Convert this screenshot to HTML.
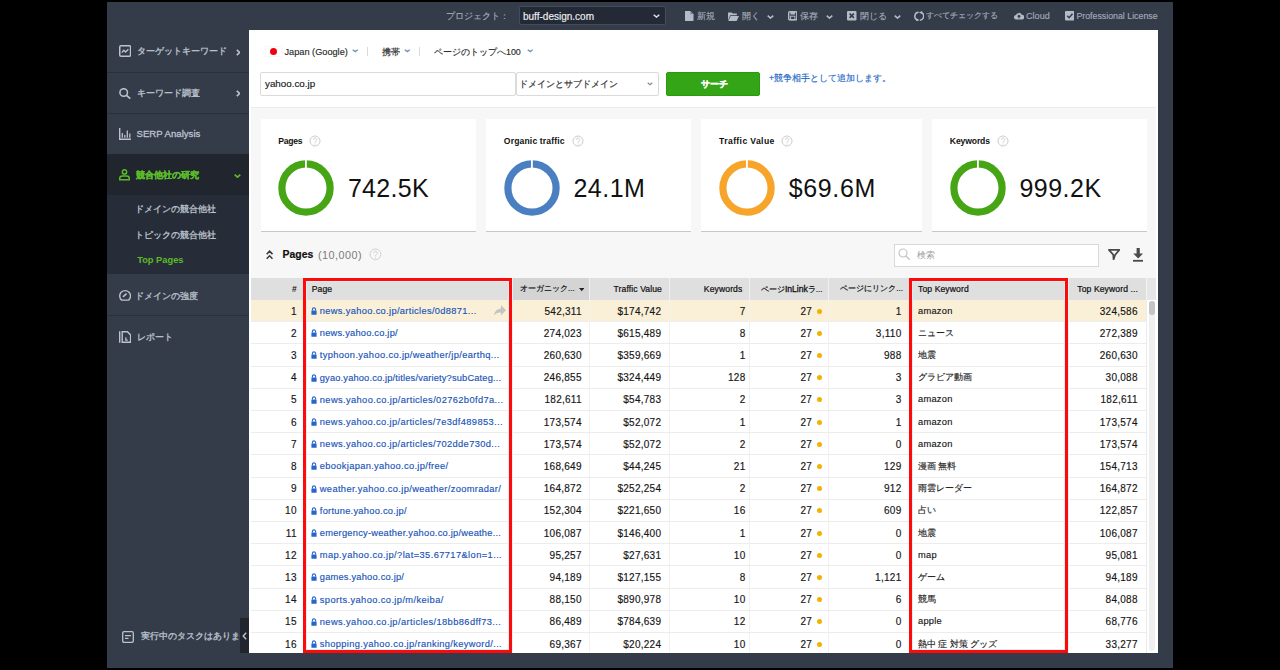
<!DOCTYPE html>
<html><head><meta charset="utf-8"><style>
*{margin:0;padding:0;box-sizing:border-box}
html,body{width:1280px;height:670px;overflow:hidden;background:#000;font-family:"Liberation Sans",sans-serif}
.ab{position:absolute;display:block}
.t{position:absolute;white-space:nowrap;line-height:1}
.num{font-size:10px;letter-spacing:0.27px;margin-right:-0.27px;color:#151515;-webkit-text-stroke:0.15px #151515}
.lnk{font-size:9.3px;color:#1853b8;-webkit-text-stroke:0.15px #1853b8}
.kw{font-size:9.3px;letter-spacing:0.25px;color:#151515;-webkit-text-stroke:0.15px #151515}
.kwj{font-size:8.7px;color:#222;-webkit-text-stroke:0.15px #222}
.hd{font-size:8.6px;letter-spacing:0.1px;color:#111;-webkit-text-stroke:0.22px #111}
.hdj{font-size:8px;color:#111;-webkit-text-stroke:0.2px #111}
</style></head><body>

<div class="ab" style="left:107px;top:2px;width:1066px;height:666px;background:#343b49"></div>
<div class="t" style="left:446px;top:12px;font-size:8.6px;color:#a3abb6;-webkit-text-stroke:0.15px #a3abb6">プロジェクト：</div>
<div class="ab" style="left:518.5px;top:6.3px;width:147px;height:19px;background:#232935;border:1px solid #444c59;border-radius:2px"></div>
<div class="t" style="left:523px;top:11.5px;font-size:10px;color:#eef0f3;-webkit-text-stroke:0.15px #eef0f3">buff-design.com</div>
<svg class="ab" style="left:653px;top:14px" width="7" height="4" viewBox="0 0 7 4"><path d="M0.7 0.7 L3.5 3.1 L6.3 0.7" fill="none" stroke="#d8dce2" stroke-width="1.5"/></svg>
<svg class="ab" style="left:685.3px;top:11px" width="8.5" height="10" viewBox="0 0 8.5 10"><path d="M0 0H5.3L8.5 3.2V10H0Z" fill="#b4bbc5"/><path d="M5.3 0V3.2H8.5" fill="#7f8794"/></svg>
<div class="t" style="left:697px;top:12px;font-size:8.6px;color:#a3abb6;-webkit-text-stroke:0.15px #a3abb6">新規</div>
<svg class="ab" style="left:727.9px;top:11.5px" width="11" height="9" viewBox="0 0 11 9"><path d="M0 0.5H3.8L4.8 1.6H8.8V3.3H2.2L0 8.5Z" fill="#b4bbc5"/><path d="M2.6 4H11L8.6 9H0.3Z" fill="#b4bbc5"/></svg>
<div class="t" style="left:741.5px;top:12px;font-size:8.6px;color:#a3abb6;-webkit-text-stroke:0.15px #a3abb6">開く</div>
<svg class="ab" style="left:767px;top:14.5px" width="7" height="4" viewBox="0 0 7 4"><path d="M0.7 0.7 L3.5 3.1 L6.3 0.7" fill="none" stroke="#b4bbc5" stroke-width="1.6"/></svg>
<svg class="ab" style="left:787.7px;top:11.3px" width="9.5" height="9.5" viewBox="0 0 9.5 9.5"><rect x="0.7" y="0.7" width="8.1" height="8.1" rx="1" fill="none" stroke="#b4bbc5" stroke-width="1.4"/><rect x="2.4" y="0.7" width="4.7" height="2.8" fill="#b4bbc5"/><rect x="2.6" y="5.2" width="4.3" height="3.6" fill="none" stroke="#b4bbc5" stroke-width="1"/></svg>
<div class="t" style="left:800px;top:12px;font-size:8.6px;color:#a3abb6;-webkit-text-stroke:0.15px #a3abb6">保存</div>
<svg class="ab" style="left:826px;top:14.5px" width="7" height="4" viewBox="0 0 7 4"><path d="M0.7 0.7 L3.5 3.1 L6.3 0.7" fill="none" stroke="#b4bbc5" stroke-width="1.6"/></svg>
<svg class="ab" style="left:847px;top:11.3px" width="9.5" height="9.5" viewBox="0 0 9.5 9.5"><rect x="0" y="0" width="9.5" height="9.5" rx="1" fill="#b4bbc5"/><path d="M2.6 2.6L6.9 6.9M6.9 2.6L2.6 6.9" stroke="#343b49" stroke-width="1.5"/></svg>
<div class="t" style="left:859.5px;top:12px;font-size:8.6px;color:#a3abb6;-webkit-text-stroke:0.15px #a3abb6">閉じる</div>
<svg class="ab" style="left:893.7px;top:14.5px" width="7" height="4" viewBox="0 0 7 4"><path d="M0.7 0.7 L3.5 3.1 L6.3 0.7" fill="none" stroke="#b4bbc5" stroke-width="1.6"/></svg>
<svg class="ab" style="left:913.8px;top:10.6px" width="10.5" height="10.5" viewBox="0 0 10.5 10.5"><path d="M4.6 1.3A4 4 0 0 0 3.3 9" fill="none" stroke="#b4bbc5" stroke-width="1.5"/><path d="M1.9 7.2L5.6 8.9L2.4 10.6Z" fill="#b4bbc5"/><path d="M5.9 9.2A4 4 0 0 0 7.2 1.5" fill="none" stroke="#b4bbc5" stroke-width="1.5"/><path d="M8.6 3.3L4.9 1.6L8.1 0Z" fill="#b4bbc5"/></svg>
<div class="t" style="left:926px;top:12px;font-size:8.2px;color:#a3abb6;-webkit-text-stroke:0.15px #a3abb6">すべてチェックする</div>
<svg class="ab" style="left:1013.6px;top:12.3px" width="10" height="7.5" viewBox="0 0 10 7.5"><path d="M2.3 7.5A2.2 2.2 0 0 1 2 3.1A3.1 3.1 0 0 1 7.8 2.7A2.3 2.3 0 0 1 7.9 7.5Z" fill="#b4bbc5"/><path d="M5 3.2V6.5M3.6 4.6L5 3.2L6.4 4.6" stroke="#343b49" stroke-width="1.1" fill="none"/></svg>
<div class="t" style="left:1026px;top:11.8px;font-size:9.1px;color:#a3abb6;-webkit-text-stroke:0.15px #a3abb6">Cloud</div>
<svg class="ab" style="left:1064.6px;top:11.2px" width="9.5" height="9.5" viewBox="0 0 9.5 9.5"><rect x="0" y="0" width="9.5" height="9.5" rx="1" fill="#b4bbc5"/><path d="M2.2 4.8L4.1 6.7L7.5 2.7" stroke="#343b49" stroke-width="1.5" fill="none"/></svg>
<div class="t" style="left:1076.4px;top:11.8px;font-size:8.8px;color:#a3abb6;-webkit-text-stroke:0.15px #a3abb6">Professional License</div>
<div class="ab" style="left:107px;top:71.5px;width:142px;height:1.2px;background:#2b313c"></div>
<div class="ab" style="left:107px;top:112.5px;width:142px;height:1.2px;background:#2b313c"></div>
<div class="ab" style="left:107px;top:154px;width:142px;height:41px;background:#20252e"></div>
<div class="ab" style="left:107px;top:195px;width:142px;height:79px;background:#272d38"></div>
<div class="ab" style="left:107px;top:315px;width:142px;height:1.2px;background:#2c323d"></div>
<svg class="ab" style="left:118.7px;top:44.8px" width="12.3" height="12" viewBox="0 0 12.3 12"><rect x="0.75" y="0.75" width="10.8" height="10.5" rx="1.3" fill="none" stroke="#bcc3cd" stroke-width="1.5"/><path d="M2.8 7.6L4.8 5.3L6.6 7L9.4 4.2" fill="none" stroke="#bcc3cd" stroke-width="1.3"/></svg>
<div class="t" style="left:137px;top:46.5px;font-size:8.9px;color:#bcc3cd;-webkit-text-stroke:0.3px #bcc3cd">ターゲットキーワード</div>
<svg class="ab" style="left:235.8px;top:49px" width="4.5" height="7" viewBox="0 0 4.5 7"><path d="M0.8 0.8L3.6 3.5L0.8 6.2" fill="none" stroke="#bcc3cd" stroke-width="1.6"/></svg>
<svg class="ab" style="left:118.7px;top:87.6px" width="12.3" height="11" viewBox="0 0 12.3 11"><circle cx="4.7" cy="4.5" r="3.8" fill="none" stroke="#bcc3cd" stroke-width="1.5"/><path d="M7.5 7.3L11.3 10.6" stroke="#bcc3cd" stroke-width="1.7"/></svg>
<div class="t" style="left:137px;top:89px;font-size:8.9px;color:#bcc3cd;-webkit-text-stroke:0.3px #bcc3cd">キーワード調査</div>
<svg class="ab" style="left:235.8px;top:90px" width="4.5" height="7" viewBox="0 0 4.5 7"><path d="M0.8 0.8L3.6 3.5L0.8 6.2" fill="none" stroke="#bcc3cd" stroke-width="1.6"/></svg>
<svg class="ab" style="left:119px;top:128px" width="12" height="12" viewBox="0 0 12 12"><path d="M0.7 0V11.3H12" fill="none" stroke="#bcc3cd" stroke-width="1.4"/><path d="M3.3 5V9.8M5.8 7V9.8M8.3 2.5V9.8M10.8 5.5V9.8" stroke="#bcc3cd" stroke-width="1.3"/></svg>
<div class="t" style="left:136.5px;top:129.3px;font-size:9.6px;color:#bcc3cd;-webkit-text-stroke:0.3px #bcc3cd">SERP Analysis</div>
<svg class="ab" style="left:119px;top:169.4px" width="11" height="11.6" viewBox="0 0 11 11.6"><circle cx="5.5" cy="2.9" r="2.2" fill="none" stroke="#5cba2a" stroke-width="1.5"/><path d="M0.75 10.85V9.3A2.4 2.4 0 0 1 3.15 6.9H7.85A2.4 2.4 0 0 1 10.25 9.3V10.85Z" fill="none" stroke="#5cba2a" stroke-width="1.5"/></svg>
<div class="t" style="left:135.5px;top:170.5px;font-size:8.9px;font-weight:bold;color:#5cba2a;-webkit-text-stroke:0.3px #5cba2a">競合他社の研究</div>
<svg class="ab" style="left:234px;top:174.2px" width="7" height="4" viewBox="0 0 7 4"><path d="M0.7 0.7 L3.5 3.1 L6.3 0.7" fill="none" stroke="#5cba2a" stroke-width="1.7"/></svg>
<div class="t" style="left:134.5px;top:204.5px;font-size:8.8px;color:#bcc3cd;-webkit-text-stroke:0.3px #bcc3cd">ドメインの競合他社</div>
<div class="t" style="left:134.5px;top:230.5px;font-size:8.8px;color:#bcc3cd;-webkit-text-stroke:0.3px #bcc3cd">トピックの競合他社</div>
<div class="t" style="left:137.2px;top:256.2px;font-size:9.3px;font-weight:bold;color:#5cba2a">Top Pages</div>
<svg class="ab" style="left:118.7px;top:289.2px" width="12.2" height="11.8" viewBox="0 0 12.2 11.8"><path d="M2.6 11.1A5.4 5.4 0 1 1 9.6 11.1Z" fill="none" stroke="#bcc3cd" stroke-width="1.4"/><path d="M3.9 7.9L7.6 4.6" stroke="#bcc3cd" stroke-width="1.5"/></svg>
<div class="t" style="left:134.5px;top:292px;font-size:8.8px;color:#bcc3cd;-webkit-text-stroke:0.3px #bcc3cd">ドメインの強度</div>
<svg class="ab" style="left:118.7px;top:330.5px" width="12.3" height="12" viewBox="0 0 12.3 12"><path d="M0.7 0.3V11.7" stroke="#bcc3cd" stroke-width="1.4"/><path d="M3.2 0.7H8.4L11.6 3.9V11.3H3.2Z" fill="none" stroke="#bcc3cd" stroke-width="1.4"/><path d="M6.8 6.3V9.2H8.8" fill="none" stroke="#bcc3cd" stroke-width="1.2"/></svg>
<div class="t" style="left:136.5px;top:332.5px;font-size:8.8px;color:#bcc3cd;-webkit-text-stroke:0.3px #bcc3cd">レポート</div>
<svg class="ab" style="left:121.5px;top:630.5px" width="12" height="12" viewBox="0 0 12 12"><rect x="0.7" y="0.7" width="10.6" height="10.6" rx="1.3" fill="none" stroke="#bcc3cd" stroke-width="1.3"/><path d="M3 4.6H9M3 7.4H6.5" stroke="#bcc3cd" stroke-width="1.2"/></svg>
<div class="t" style="left:141px;top:632px;font-size:8.8px;color:#bcc3cd;-webkit-text-stroke:0.3px #bcc3cd">実行中のタスクはありませ</div>
<div class="ab" style="left:240px;top:617.5px;width:9px;height:35.5px;background:#20252e"></div>
<svg class="ab" style="left:242px;top:632px" width="5" height="8" viewBox="0 0 5 8"><path d="M4.2 0.8L1.2 4L4.2 7.2" fill="none" stroke="#bcc3cd" stroke-width="1.4"/></svg>
<div class="ab" style="left:249px;top:30px;width:909px;height:623px;background:#fff"></div>
<div class="ab" style="left:0;top:0;width:1280px;height:653px;overflow:hidden;clip-path:inset(30px 122px 0 249px)">
<div class="ab" style="left:265.6px;top:46.7px;width:16px;height:9.8px;background:#fff;box-shadow:0 0 1.5px rgba(0,0,0,.13)"></div>
<div class="ab" style="left:270.2px;top:47.6px;width:7.1px;height:7.1px;border-radius:50%;background:#f0000f"></div>
<div class="t" style="left:284.5px;top:47.9px;font-size:9.2px;color:#2a2a2a;-webkit-text-stroke:0.15px #2a2a2a">Japan (Google)</div>
<svg class="ab" style="left:352px;top:49.2px" width="6.5" height="3.5" viewBox="0 0 6.5 3.5"><path d="M0.7 0.7 L3.25 2.6 L5.8 0.7" fill="none" stroke="#7a90ab" stroke-width="1.3"/></svg>
<div class="ab" style="left:367px;top:47px;width:1px;height:9px;background:#dadada"></div>
<div class="t" style="left:382px;top:48px;font-size:8.8px;color:#2a2a2a;-webkit-text-stroke:0.15px #2a2a2a">携帯</div>
<svg class="ab" style="left:404.2px;top:49.2px" width="6.5" height="3.5" viewBox="0 0 6.5 3.5"><path d="M0.7 0.7 L3.25 2.6 L5.8 0.7" fill="none" stroke="#7a90ab" stroke-width="1.3"/></svg>
<div class="ab" style="left:419px;top:47px;width:1px;height:9px;background:#dadada"></div>
<div class="t" style="left:434px;top:48px;font-size:8.9px;color:#2a2a2a;-webkit-text-stroke:0.15px #2a2a2a">ページのトップへ100</div>
<svg class="ab" style="left:526.5px;top:49.2px" width="6.5" height="3.5" viewBox="0 0 6.5 3.5"><path d="M0.7 0.7 L3.25 2.6 L5.8 0.7" fill="none" stroke="#7a90ab" stroke-width="1.3"/></svg>
<div class="ab" style="left:260px;top:72.4px;width:256px;height:23.2px;border:1px solid #dadada;border-radius:2px;background:#fff"></div>
<div class="t" style="left:265px;top:79px;font-size:9.8px;color:#1a1a1a;-webkit-text-stroke:0.15px #1a1a1a">yahoo.co.jp</div>
<div class="ab" style="left:515.6px;top:72.4px;width:143px;height:23.2px;border:1px solid #dadada;border-radius:2px;background:#fff"></div>
<div class="t" style="left:518.5px;top:79.5px;font-size:8.8px;color:#2a2a2a;-webkit-text-stroke:0.15px #2a2a2a">ドメインとサブドメイン</div>
<svg class="ab" style="left:646.5px;top:82px" width="6" height="3.5" viewBox="0 0 6 3.5"><path d="M0.7 0.7 L3.0 2.6 L5.3 0.7" fill="none" stroke="#8a8a8a" stroke-width="1.2"/></svg>
<div class="ab" style="left:666px;top:72.2px;width:94.4px;height:23.4px;background:#33a516;border:1px solid #2b9a10;border-radius:2px"></div>
<div class="t" style="left:700.5px;top:79.5px;font-size:8.8px;font-weight:bold;color:#fff;-webkit-text-stroke:0.35px #fff">サーチ</div>
<div class="t" style="left:769px;top:73.5px;font-size:8.6px;color:#2468c6;-webkit-text-stroke:0.15px #2468c6">+競争相手として追加します。</div>
<div class="ab" style="left:251px;top:107px;width:905px;height:546px;background:#f7f7f7;border-top:1px solid #ebebeb"></div>
<div class="ab" style="left:260.5px;top:118.7px;width:215px;height:113.5px;background:#fff;border-bottom:1.5px solid #c8c8c8"></div>
<div class="t" style="left:278.3px;top:137.2px;font-size:8.6px;font-weight:bold;color:#111;letter-spacing:-0.25px">Pages</div>
<svg class="ab" style="left:308.7px;top:135.2px" width="12" height="12" viewBox="0 0 12 12"><circle cx="6" cy="6" r="5" fill="none" stroke="#cccccc" stroke-width="1"/><path d="M4.3 4.8A1.7 1.7 0 1 1 7.1 6.1C6.3 6.6 6 6.9 6 7.7" fill="none" stroke="#cccccc" stroke-width="1"/><circle cx="6" cy="9.1" r="0.6" fill="#cccccc"/></svg>
<svg class="ab" style="left:278.3px;top:159.5px" width="56" height="56" viewBox="0 0 56 56"><circle cx="28" cy="28" r="24.1" fill="none" stroke="#45a515" stroke-width="7.2"/><rect x="27" y="0" width="1.8" height="9" fill="#fff"/></svg>
<div class="t" style="left:347.9px;top:175.6px;font-size:25px;color:#111;letter-spacing:0.3px">742.5K</div>
<div class="ab" style="left:486px;top:118.7px;width:205.25px;height:113.5px;background:#fff;border-bottom:1.5px solid #c8c8c8"></div>
<div class="t" style="left:503.8px;top:137.2px;font-size:8.6px;font-weight:bold;color:#111;letter-spacing:0.15px">Organic traffic</div>
<svg class="ab" style="left:571.5px;top:135.2px" width="12" height="12" viewBox="0 0 12 12"><circle cx="6" cy="6" r="5" fill="none" stroke="#cccccc" stroke-width="1"/><path d="M4.3 4.8A1.7 1.7 0 1 1 7.1 6.1C6.3 6.6 6 6.9 6 7.7" fill="none" stroke="#cccccc" stroke-width="1"/><circle cx="6" cy="9.1" r="0.6" fill="#cccccc"/></svg>
<svg class="ab" style="left:503.79999999999995px;top:159.5px" width="56" height="56" viewBox="0 0 56 56"><circle cx="28" cy="28" r="24.1" fill="none" stroke="#4a80c1" stroke-width="7.2"/><rect x="27" y="0" width="1.8" height="9" fill="#fff"/></svg>
<div class="t" style="left:573.4px;top:175.6px;font-size:25px;color:#111;letter-spacing:0.5px">24.1M</div>
<div class="ab" style="left:701.3px;top:118.7px;width:220.7px;height:113.5px;background:#fff;border-bottom:1.5px solid #c8c8c8"></div>
<div class="t" style="left:719.0999999999999px;top:137.2px;font-size:8.6px;font-weight:bold;color:#111;letter-spacing:0.38px">Traffic Value</div>
<svg class="ab" style="left:780.5px;top:135.2px" width="12" height="12" viewBox="0 0 12 12"><circle cx="6" cy="6" r="5" fill="none" stroke="#cccccc" stroke-width="1"/><path d="M4.3 4.8A1.7 1.7 0 1 1 7.1 6.1C6.3 6.6 6 6.9 6 7.7" fill="none" stroke="#cccccc" stroke-width="1"/><circle cx="6" cy="9.1" r="0.6" fill="#cccccc"/></svg>
<svg class="ab" style="left:719.0999999999999px;top:159.5px" width="56" height="56" viewBox="0 0 56 56"><circle cx="28" cy="28" r="24.1" fill="none" stroke="#f7a42a" stroke-width="7.2"/><rect x="27" y="0" width="1.8" height="9" fill="#fff"/></svg>
<div class="t" style="left:788.6999999999999px;top:175.6px;font-size:25px;color:#111;letter-spacing:0.65px">$69.6M</div>
<div class="ab" style="left:932px;top:118.7px;width:215px;height:113.5px;background:#fff;border-bottom:1.5px solid #c8c8c8"></div>
<div class="t" style="left:949.8px;top:137.2px;font-size:8.6px;font-weight:bold;color:#111;letter-spacing:-0.12px">Keywords</div>
<svg class="ab" style="left:996.5px;top:135.2px" width="12" height="12" viewBox="0 0 12 12"><circle cx="6" cy="6" r="5" fill="none" stroke="#cccccc" stroke-width="1"/><path d="M4.3 4.8A1.7 1.7 0 1 1 7.1 6.1C6.3 6.6 6 6.9 6 7.7" fill="none" stroke="#cccccc" stroke-width="1"/><circle cx="6" cy="9.1" r="0.6" fill="#cccccc"/></svg>
<svg class="ab" style="left:949.8px;top:159.5px" width="56" height="56" viewBox="0 0 56 56"><circle cx="28" cy="28" r="24.1" fill="none" stroke="#45a515" stroke-width="7.2"/><rect x="27" y="0" width="1.8" height="9" fill="#fff"/></svg>
<div class="t" style="left:1019.4px;top:175.6px;font-size:25px;color:#111;letter-spacing:0.5px">999.2K</div>
<svg class="ab" style="left:265.7px;top:250px" width="7.2" height="9.6" viewBox="0 0 7.2 9.6"><path d="M0.7 4.2L3.6 1.2L6.5 4.2M0.7 8.8L3.6 5.8L6.5 8.8" fill="none" stroke="#3a3a3a" stroke-width="1.6"/></svg>
<div class="t" style="left:282.6px;top:250.4px;font-size:10.4px;font-weight:bold;color:#111;-webkit-text-stroke:0.2px #111">Pages</div>
<div class="t" style="left:318px;top:249.8px;font-size:10.8px;letter-spacing:0.5px;color:#7a7a7a">(10,000)</div>
<svg class="ab" style="left:369.0px;top:248.2px" width="12.8" height="12.8" viewBox="0 0 12.8 12.8"><circle cx="6.4" cy="6.4" r="5.4" fill="none" stroke="#d0d0d0" stroke-width="1"/><path d="M4.564 5.104A1.836 1.836 0 1 1 7.588000000000001 6.508C6.724 7.048 6.4 7.372000000000001 6.4 8.236" fill="none" stroke="#d0d0d0" stroke-width="1"/><circle cx="6.4" cy="9.748000000000001" r="0.648" fill="#d0d0d0"/></svg>
<div class="ab" style="left:894px;top:243.6px;width:205px;height:23px;border:1px solid #d8d8d8;background:#fff"></div>
<svg class="ab" style="left:898px;top:248px" width="13" height="13" viewBox="0 0 13 13"><circle cx="5" cy="5" r="4" fill="none" stroke="#c6c6c6" stroke-width="1.2"/><path d="M7.9 7.9L11.8 11.8" stroke="#c6c6c6" stroke-width="1.4"/></svg>
<div class="t" style="left:917px;top:250.5px;font-size:8.8px;color:#a0a0a0">検索</div>
<svg class="ab" style="left:1108px;top:249px" width="12.4" height="11.4" viewBox="0 0 12.4 11.4"><path d="M0.9 0.9H11.5L7.3 5.6L5.6 10.6L5.2 5.6Z" fill="none" stroke="#4a4a4a" stroke-width="1.7" stroke-linejoin="round"/></svg>
<svg class="ab" style="left:1133px;top:248.4px" width="10.4" height="13.7" viewBox="0 0 10.4 13.7"><path d="M3.6 0H6.8V5.4H10.2L5.2 10.6L0.2 5.4H3.6Z" fill="#4a4a4a"/><rect x="0" y="11.9" width="10.4" height="1.8" fill="#4a4a4a"/></svg>
<div class="ab" style="left:251px;top:278.2px;width:895px;height:21.8px;background:#dfdfdf"></div>
<div class="ab" style="left:512px;top:278.2px;width:77px;height:21.8px;background:#d4d4d4"></div>
<div class="ab" style="left:512px;top:278.2px;width:1px;height:21.8px;background:#f0f0f0"></div>
<div class="ab" style="left:589px;top:278.2px;width:1px;height:21.8px;background:#f0f0f0"></div>
<div class="ab" style="left:669px;top:278.2px;width:1px;height:21.8px;background:#f0f0f0"></div>
<div class="ab" style="left:749px;top:278.2px;width:1px;height:21.8px;background:#f0f0f0"></div>
<div class="ab" style="left:828px;top:278.2px;width:1px;height:21.8px;background:#f0f0f0"></div>
<div class="ab" style="left:909px;top:278.2px;width:1px;height:21.8px;background:#f0f0f0"></div>
<div class="ab" style="left:1068px;top:278.2px;width:1px;height:21.8px;background:#f0f0f0"></div>
<div class="ab" style="left:1146px;top:278.2px;width:10px;height:21.8px;background:#e6e6e6;border-left:1px solid #f4f4f4"></div>
<div class="ab" style="left:1145.5px;top:300px;width:10.5px;height:353px;background:#fff;border-left:1px solid #ececec"></div>
<div class="ab" style="left:1149.2px;top:301.2px;width:5.8px;height:349.5px;background:#efefef;border-radius:3px"></div>
<div class="ab" style="left:1149.2px;top:301.2px;width:5.8px;height:14.2px;background:#c4c4c4;border-radius:3px"></div>
<div class="t" style="right:983.2px;top:285.3px;font-size:8.5px;font-weight:bold;color:#1a1a1a">#</div>
<div class="t hd" style="left:311.7px;top:285.3px">Page</div>
<div class="t hdj" style="left:520px;top:285.0px">オーガニック...</div>
<svg class="ab" style="left:578.5px;top:288px" width="5.5" height="3.5" viewBox="0 0 5.5 3.5"><path d="M0 0H5.5L2.75 3.3Z" fill="#222"/></svg>
<div class="t hd" style="right:618px;top:285.3px">Traffic Value</div>
<div class="t hd" style="right:537.6px;top:285.3px">Keywords</div>
<div class="t hdj" style="right:457.5px;top:285.0px">ページ<span style="font-size:8.6px;-webkit-text-stroke:0.3px #111">InLink</span>ラ...</div>
<div class="t hdj" style="right:377px;top:285.0px">ページにリンク...</div>
<div class="t hd" style="left:918px;top:285.3px">Top Keyword</div>
<div class="t hd" style="right:142px;top:285.3px">Top Keyword ...</div>
<div class="ab" style="left:251px;top:300.0px;width:895px;height:22.2px;background:#faf0d8;border-bottom:1px solid #ededed"></div>
<div class="ab" style="left:512px;top:300.0px;width:1px;height:21.2px;background:#f1f1f1"></div>
<div class="ab" style="left:589px;top:300.0px;width:1px;height:21.2px;background:#f1f1f1"></div>
<div class="ab" style="left:669px;top:300.0px;width:1px;height:21.2px;background:#f1f1f1"></div>
<div class="ab" style="left:749px;top:300.0px;width:1px;height:21.2px;background:#f1f1f1"></div>
<div class="ab" style="left:828px;top:300.0px;width:1px;height:21.2px;background:#f1f1f1"></div>
<div class="ab" style="left:909px;top:300.0px;width:1px;height:21.2px;background:#f1f1f1"></div>
<div class="ab" style="left:1068px;top:300.0px;width:1px;height:21.2px;background:#f1f1f1"></div>
<div class="t num" style="right:983.5px;top:306.5px">1</div>
<svg class="ab" style="left:311.2px;top:307.0px" width="6" height="8" viewBox="0 0 6 8"><path d="M1.4 3.6V2.5a1.6 1.6 0 0 1 3.2 0V3.6" fill="none" stroke="#2566c8" stroke-width="1.1"/><rect x="0.4" y="3.4" width="5.2" height="4.3" rx="0.5" fill="#2566c8"/></svg>
<div class="t lnk" style="left:319.8px;top:307.0px;letter-spacing:0.331px">news.yahoo.co.jp/articles/0d8871...</div>
<div class="t num" style="right:698.5px;top:306.5px">542,311</div>
<div class="t num" style="right:619px;top:306.5px">$174,742</div>
<div class="t num" style="right:534.8px;top:306.5px">7</div>
<div class="t num" style="right:468.20000000000005px;top:306.5px">27</div>
<div class="ab" style="left:816.6px;top:308.6px;width:5px;height:5px;border-radius:50%;background:#f0b300"></div>
<div class="t num" style="right:378.79999999999995px;top:306.5px">1</div>
<div class="t kw" style="left:918px;top:306.6px">amazon</div>
<div class="t num" style="right:142.5px;top:306.5px">324,586</div>
<div class="ab" style="left:251px;top:322.2px;width:895px;height:22.2px;background:#fff;border-bottom:1px solid #ededed"></div>
<div class="ab" style="left:512px;top:322.2px;width:1px;height:21.2px;background:#f1f1f1"></div>
<div class="ab" style="left:589px;top:322.2px;width:1px;height:21.2px;background:#f1f1f1"></div>
<div class="ab" style="left:669px;top:322.2px;width:1px;height:21.2px;background:#f1f1f1"></div>
<div class="ab" style="left:749px;top:322.2px;width:1px;height:21.2px;background:#f1f1f1"></div>
<div class="ab" style="left:828px;top:322.2px;width:1px;height:21.2px;background:#f1f1f1"></div>
<div class="ab" style="left:909px;top:322.2px;width:1px;height:21.2px;background:#f1f1f1"></div>
<div class="ab" style="left:1068px;top:322.2px;width:1px;height:21.2px;background:#f1f1f1"></div>
<div class="t num" style="right:983.5px;top:328.7px">2</div>
<svg class="ab" style="left:311.2px;top:329.2px" width="6" height="8" viewBox="0 0 6 8"><path d="M1.4 3.6V2.5a1.6 1.6 0 0 1 3.2 0V3.6" fill="none" stroke="#2566c8" stroke-width="1.1"/><rect x="0.4" y="3.4" width="5.2" height="4.3" rx="0.5" fill="#2566c8"/></svg>
<div class="t lnk" style="left:319.8px;top:329.2px;letter-spacing:0.211px">news.yahoo.co.jp/</div>
<div class="t num" style="right:698.5px;top:328.7px">274,023</div>
<div class="t num" style="right:619px;top:328.7px">$615,489</div>
<div class="t num" style="right:534.8px;top:328.7px">8</div>
<div class="t num" style="right:468.20000000000005px;top:328.7px">27</div>
<div class="ab" style="left:816.6px;top:330.8px;width:5px;height:5px;border-radius:50%;background:#f0b300"></div>
<div class="t num" style="right:378.79999999999995px;top:328.7px">3,110</div>
<div class="t kwj" style="left:918px;top:328.8px">ニュース</div>
<div class="t num" style="right:142.5px;top:328.7px">272,389</div>
<div class="ab" style="left:251px;top:344.4px;width:895px;height:22.2px;background:#fff;border-bottom:1px solid #ededed"></div>
<div class="ab" style="left:512px;top:344.4px;width:1px;height:21.2px;background:#f1f1f1"></div>
<div class="ab" style="left:589px;top:344.4px;width:1px;height:21.2px;background:#f1f1f1"></div>
<div class="ab" style="left:669px;top:344.4px;width:1px;height:21.2px;background:#f1f1f1"></div>
<div class="ab" style="left:749px;top:344.4px;width:1px;height:21.2px;background:#f1f1f1"></div>
<div class="ab" style="left:828px;top:344.4px;width:1px;height:21.2px;background:#f1f1f1"></div>
<div class="ab" style="left:909px;top:344.4px;width:1px;height:21.2px;background:#f1f1f1"></div>
<div class="ab" style="left:1068px;top:344.4px;width:1px;height:21.2px;background:#f1f1f1"></div>
<div class="t num" style="right:983.5px;top:350.9px">3</div>
<svg class="ab" style="left:311.2px;top:351.4px" width="6" height="8" viewBox="0 0 6 8"><path d="M1.4 3.6V2.5a1.6 1.6 0 0 1 3.2 0V3.6" fill="none" stroke="#2566c8" stroke-width="1.1"/><rect x="0.4" y="3.4" width="5.2" height="4.3" rx="0.5" fill="#2566c8"/></svg>
<div class="t lnk" style="left:319.8px;top:351.4px;letter-spacing:0.359px">typhoon.yahoo.co.jp/weather/jp/earthq...</div>
<div class="t num" style="right:698.5px;top:350.9px">260,630</div>
<div class="t num" style="right:619px;top:350.9px">$359,669</div>
<div class="t num" style="right:534.8px;top:350.9px">1</div>
<div class="t num" style="right:468.20000000000005px;top:350.9px">27</div>
<div class="ab" style="left:816.6px;top:353.0px;width:5px;height:5px;border-radius:50%;background:#f0b300"></div>
<div class="t num" style="right:378.79999999999995px;top:350.9px">988</div>
<div class="t kwj" style="left:918px;top:351.0px">地震</div>
<div class="t num" style="right:142.5px;top:350.9px">260,630</div>
<div class="ab" style="left:251px;top:366.6px;width:895px;height:22.2px;background:#fff;border-bottom:1px solid #ededed"></div>
<div class="ab" style="left:512px;top:366.6px;width:1px;height:21.2px;background:#f1f1f1"></div>
<div class="ab" style="left:589px;top:366.6px;width:1px;height:21.2px;background:#f1f1f1"></div>
<div class="ab" style="left:669px;top:366.6px;width:1px;height:21.2px;background:#f1f1f1"></div>
<div class="ab" style="left:749px;top:366.6px;width:1px;height:21.2px;background:#f1f1f1"></div>
<div class="ab" style="left:828px;top:366.6px;width:1px;height:21.2px;background:#f1f1f1"></div>
<div class="ab" style="left:909px;top:366.6px;width:1px;height:21.2px;background:#f1f1f1"></div>
<div class="ab" style="left:1068px;top:366.6px;width:1px;height:21.2px;background:#f1f1f1"></div>
<div class="t num" style="right:983.5px;top:373.1px">4</div>
<svg class="ab" style="left:311.2px;top:373.6px" width="6" height="8" viewBox="0 0 6 8"><path d="M1.4 3.6V2.5a1.6 1.6 0 0 1 3.2 0V3.6" fill="none" stroke="#2566c8" stroke-width="1.1"/><rect x="0.4" y="3.4" width="5.2" height="4.3" rx="0.5" fill="#2566c8"/></svg>
<div class="t lnk" style="left:319.8px;top:373.6px;letter-spacing:0.157px">gyao.yahoo.co.jp/titles/variety?subCateg...</div>
<div class="t num" style="right:698.5px;top:373.1px">246,855</div>
<div class="t num" style="right:619px;top:373.1px">$324,449</div>
<div class="t num" style="right:534.8px;top:373.1px">128</div>
<div class="t num" style="right:468.20000000000005px;top:373.1px">27</div>
<div class="ab" style="left:816.6px;top:375.2px;width:5px;height:5px;border-radius:50%;background:#f0b300"></div>
<div class="t num" style="right:378.79999999999995px;top:373.1px">3</div>
<div class="t kwj" style="left:918px;top:373.2px">グラビア動画</div>
<div class="t num" style="right:142.5px;top:373.1px">30,088</div>
<div class="ab" style="left:251px;top:388.8px;width:895px;height:22.2px;background:#fff;border-bottom:1px solid #ededed"></div>
<div class="ab" style="left:512px;top:388.8px;width:1px;height:21.2px;background:#f1f1f1"></div>
<div class="ab" style="left:589px;top:388.8px;width:1px;height:21.2px;background:#f1f1f1"></div>
<div class="ab" style="left:669px;top:388.8px;width:1px;height:21.2px;background:#f1f1f1"></div>
<div class="ab" style="left:749px;top:388.8px;width:1px;height:21.2px;background:#f1f1f1"></div>
<div class="ab" style="left:828px;top:388.8px;width:1px;height:21.2px;background:#f1f1f1"></div>
<div class="ab" style="left:909px;top:388.8px;width:1px;height:21.2px;background:#f1f1f1"></div>
<div class="ab" style="left:1068px;top:388.8px;width:1px;height:21.2px;background:#f1f1f1"></div>
<div class="t num" style="right:983.5px;top:395.3px">5</div>
<svg class="ab" style="left:311.2px;top:395.8px" width="6" height="8" viewBox="0 0 6 8"><path d="M1.4 3.6V2.5a1.6 1.6 0 0 1 3.2 0V3.6" fill="none" stroke="#2566c8" stroke-width="1.1"/><rect x="0.4" y="3.4" width="5.2" height="4.3" rx="0.5" fill="#2566c8"/></svg>
<div class="t lnk" style="left:319.8px;top:395.8px;letter-spacing:0.379px">news.yahoo.co.jp/articles/02762b0fd7a...</div>
<div class="t num" style="right:698.5px;top:395.3px">182,611</div>
<div class="t num" style="right:619px;top:395.3px">$54,783</div>
<div class="t num" style="right:534.8px;top:395.3px">2</div>
<div class="t num" style="right:468.20000000000005px;top:395.3px">27</div>
<div class="ab" style="left:816.6px;top:397.4px;width:5px;height:5px;border-radius:50%;background:#f0b300"></div>
<div class="t num" style="right:378.79999999999995px;top:395.3px">3</div>
<div class="t kw" style="left:918px;top:395.4px">amazon</div>
<div class="t num" style="right:142.5px;top:395.3px">182,611</div>
<div class="ab" style="left:251px;top:411.0px;width:895px;height:22.2px;background:#fff;border-bottom:1px solid #ededed"></div>
<div class="ab" style="left:512px;top:411.0px;width:1px;height:21.2px;background:#f1f1f1"></div>
<div class="ab" style="left:589px;top:411.0px;width:1px;height:21.2px;background:#f1f1f1"></div>
<div class="ab" style="left:669px;top:411.0px;width:1px;height:21.2px;background:#f1f1f1"></div>
<div class="ab" style="left:749px;top:411.0px;width:1px;height:21.2px;background:#f1f1f1"></div>
<div class="ab" style="left:828px;top:411.0px;width:1px;height:21.2px;background:#f1f1f1"></div>
<div class="ab" style="left:909px;top:411.0px;width:1px;height:21.2px;background:#f1f1f1"></div>
<div class="ab" style="left:1068px;top:411.0px;width:1px;height:21.2px;background:#f1f1f1"></div>
<div class="t num" style="right:983.5px;top:417.5px">6</div>
<svg class="ab" style="left:311.2px;top:418.0px" width="6" height="8" viewBox="0 0 6 8"><path d="M1.4 3.6V2.5a1.6 1.6 0 0 1 3.2 0V3.6" fill="none" stroke="#2566c8" stroke-width="1.1"/><rect x="0.4" y="3.4" width="5.2" height="4.3" rx="0.5" fill="#2566c8"/></svg>
<div class="t lnk" style="left:319.8px;top:418.0px;letter-spacing:0.364px">news.yahoo.co.jp/articles/7e3df489853...</div>
<div class="t num" style="right:698.5px;top:417.5px">173,574</div>
<div class="t num" style="right:619px;top:417.5px">$52,072</div>
<div class="t num" style="right:534.8px;top:417.5px">1</div>
<div class="t num" style="right:468.20000000000005px;top:417.5px">27</div>
<div class="ab" style="left:816.6px;top:419.6px;width:5px;height:5px;border-radius:50%;background:#f0b300"></div>
<div class="t num" style="right:378.79999999999995px;top:417.5px">1</div>
<div class="t kw" style="left:918px;top:417.6px">amazon</div>
<div class="t num" style="right:142.5px;top:417.5px">173,574</div>
<div class="ab" style="left:251px;top:433.2px;width:895px;height:22.2px;background:#fff;border-bottom:1px solid #ededed"></div>
<div class="ab" style="left:512px;top:433.2px;width:1px;height:21.2px;background:#f1f1f1"></div>
<div class="ab" style="left:589px;top:433.2px;width:1px;height:21.2px;background:#f1f1f1"></div>
<div class="ab" style="left:669px;top:433.2px;width:1px;height:21.2px;background:#f1f1f1"></div>
<div class="ab" style="left:749px;top:433.2px;width:1px;height:21.2px;background:#f1f1f1"></div>
<div class="ab" style="left:828px;top:433.2px;width:1px;height:21.2px;background:#f1f1f1"></div>
<div class="ab" style="left:909px;top:433.2px;width:1px;height:21.2px;background:#f1f1f1"></div>
<div class="ab" style="left:1068px;top:433.2px;width:1px;height:21.2px;background:#f1f1f1"></div>
<div class="t num" style="right:983.5px;top:439.7px">7</div>
<svg class="ab" style="left:311.2px;top:440.2px" width="6" height="8" viewBox="0 0 6 8"><path d="M1.4 3.6V2.5a1.6 1.6 0 0 1 3.2 0V3.6" fill="none" stroke="#2566c8" stroke-width="1.1"/><rect x="0.4" y="3.4" width="5.2" height="4.3" rx="0.5" fill="#2566c8"/></svg>
<div class="t lnk" style="left:319.8px;top:440.2px;letter-spacing:0.371px">news.yahoo.co.jp/articles/702dde730d...</div>
<div class="t num" style="right:698.5px;top:439.7px">173,574</div>
<div class="t num" style="right:619px;top:439.7px">$52,072</div>
<div class="t num" style="right:534.8px;top:439.7px">2</div>
<div class="t num" style="right:468.20000000000005px;top:439.7px">27</div>
<div class="ab" style="left:816.6px;top:441.8px;width:5px;height:5px;border-radius:50%;background:#f0b300"></div>
<div class="t num" style="right:378.79999999999995px;top:439.7px">0</div>
<div class="t kw" style="left:918px;top:439.8px">amazon</div>
<div class="t num" style="right:142.5px;top:439.7px">173,574</div>
<div class="ab" style="left:251px;top:455.4px;width:895px;height:22.2px;background:#fff;border-bottom:1px solid #ededed"></div>
<div class="ab" style="left:512px;top:455.4px;width:1px;height:21.2px;background:#f1f1f1"></div>
<div class="ab" style="left:589px;top:455.4px;width:1px;height:21.2px;background:#f1f1f1"></div>
<div class="ab" style="left:669px;top:455.4px;width:1px;height:21.2px;background:#f1f1f1"></div>
<div class="ab" style="left:749px;top:455.4px;width:1px;height:21.2px;background:#f1f1f1"></div>
<div class="ab" style="left:828px;top:455.4px;width:1px;height:21.2px;background:#f1f1f1"></div>
<div class="ab" style="left:909px;top:455.4px;width:1px;height:21.2px;background:#f1f1f1"></div>
<div class="ab" style="left:1068px;top:455.4px;width:1px;height:21.2px;background:#f1f1f1"></div>
<div class="t num" style="right:983.5px;top:461.9px">8</div>
<svg class="ab" style="left:311.2px;top:462.4px" width="6" height="8" viewBox="0 0 6 8"><path d="M1.4 3.6V2.5a1.6 1.6 0 0 1 3.2 0V3.6" fill="none" stroke="#2566c8" stroke-width="1.1"/><rect x="0.4" y="3.4" width="5.2" height="4.3" rx="0.5" fill="#2566c8"/></svg>
<div class="t lnk" style="left:319.8px;top:462.4px;letter-spacing:0.329px">ebookjapan.yahoo.co.jp/free/</div>
<div class="t num" style="right:698.5px;top:461.9px">168,649</div>
<div class="t num" style="right:619px;top:461.9px">$44,245</div>
<div class="t num" style="right:534.8px;top:461.9px">21</div>
<div class="t num" style="right:468.20000000000005px;top:461.9px">27</div>
<div class="ab" style="left:816.6px;top:464.0px;width:5px;height:5px;border-radius:50%;background:#f0b300"></div>
<div class="t num" style="right:378.79999999999995px;top:461.9px">129</div>
<div class="t kwj" style="left:918px;top:462.0px">漫画 無料</div>
<div class="t num" style="right:142.5px;top:461.9px">154,713</div>
<div class="ab" style="left:251px;top:477.6px;width:895px;height:22.2px;background:#fff;border-bottom:1px solid #ededed"></div>
<div class="ab" style="left:512px;top:477.6px;width:1px;height:21.2px;background:#f1f1f1"></div>
<div class="ab" style="left:589px;top:477.6px;width:1px;height:21.2px;background:#f1f1f1"></div>
<div class="ab" style="left:669px;top:477.6px;width:1px;height:21.2px;background:#f1f1f1"></div>
<div class="ab" style="left:749px;top:477.6px;width:1px;height:21.2px;background:#f1f1f1"></div>
<div class="ab" style="left:828px;top:477.6px;width:1px;height:21.2px;background:#f1f1f1"></div>
<div class="ab" style="left:909px;top:477.6px;width:1px;height:21.2px;background:#f1f1f1"></div>
<div class="ab" style="left:1068px;top:477.6px;width:1px;height:21.2px;background:#f1f1f1"></div>
<div class="t num" style="right:983.5px;top:484.1px">9</div>
<svg class="ab" style="left:311.2px;top:484.6px" width="6" height="8" viewBox="0 0 6 8"><path d="M1.4 3.6V2.5a1.6 1.6 0 0 1 3.2 0V3.6" fill="none" stroke="#2566c8" stroke-width="1.1"/><rect x="0.4" y="3.4" width="5.2" height="4.3" rx="0.5" fill="#2566c8"/></svg>
<div class="t lnk" style="left:319.8px;top:484.6px;letter-spacing:0.355px">weather.yahoo.co.jp/weather/zoomradar/</div>
<div class="t num" style="right:698.5px;top:484.1px">164,872</div>
<div class="t num" style="right:619px;top:484.1px">$252,254</div>
<div class="t num" style="right:534.8px;top:484.1px">2</div>
<div class="t num" style="right:468.20000000000005px;top:484.1px">27</div>
<div class="ab" style="left:816.6px;top:486.2px;width:5px;height:5px;border-radius:50%;background:#f0b300"></div>
<div class="t num" style="right:378.79999999999995px;top:484.1px">912</div>
<div class="t kwj" style="left:918px;top:484.2px">雨雲レーダー</div>
<div class="t num" style="right:142.5px;top:484.1px">164,872</div>
<div class="ab" style="left:251px;top:499.8px;width:895px;height:22.2px;background:#fff;border-bottom:1px solid #ededed"></div>
<div class="ab" style="left:512px;top:499.8px;width:1px;height:21.2px;background:#f1f1f1"></div>
<div class="ab" style="left:589px;top:499.8px;width:1px;height:21.2px;background:#f1f1f1"></div>
<div class="ab" style="left:669px;top:499.8px;width:1px;height:21.2px;background:#f1f1f1"></div>
<div class="ab" style="left:749px;top:499.8px;width:1px;height:21.2px;background:#f1f1f1"></div>
<div class="ab" style="left:828px;top:499.8px;width:1px;height:21.2px;background:#f1f1f1"></div>
<div class="ab" style="left:909px;top:499.8px;width:1px;height:21.2px;background:#f1f1f1"></div>
<div class="ab" style="left:1068px;top:499.8px;width:1px;height:21.2px;background:#f1f1f1"></div>
<div class="t num" style="right:983.5px;top:506.3px">10</div>
<svg class="ab" style="left:311.2px;top:506.8px" width="6" height="8" viewBox="0 0 6 8"><path d="M1.4 3.6V2.5a1.6 1.6 0 0 1 3.2 0V3.6" fill="none" stroke="#2566c8" stroke-width="1.1"/><rect x="0.4" y="3.4" width="5.2" height="4.3" rx="0.5" fill="#2566c8"/></svg>
<div class="t lnk" style="left:319.8px;top:506.8px;letter-spacing:0.265px">fortune.yahoo.co.jp/</div>
<div class="t num" style="right:698.5px;top:506.3px">152,304</div>
<div class="t num" style="right:619px;top:506.3px">$221,650</div>
<div class="t num" style="right:534.8px;top:506.3px">16</div>
<div class="t num" style="right:468.20000000000005px;top:506.3px">27</div>
<div class="ab" style="left:816.6px;top:508.4px;width:5px;height:5px;border-radius:50%;background:#f0b300"></div>
<div class="t num" style="right:378.79999999999995px;top:506.3px">609</div>
<div class="t kwj" style="left:918px;top:506.4px">占い</div>
<div class="t num" style="right:142.5px;top:506.3px">122,857</div>
<div class="ab" style="left:251px;top:522.0px;width:895px;height:22.2px;background:#fff;border-bottom:1px solid #ededed"></div>
<div class="ab" style="left:512px;top:522.0px;width:1px;height:21.2px;background:#f1f1f1"></div>
<div class="ab" style="left:589px;top:522.0px;width:1px;height:21.2px;background:#f1f1f1"></div>
<div class="ab" style="left:669px;top:522.0px;width:1px;height:21.2px;background:#f1f1f1"></div>
<div class="ab" style="left:749px;top:522.0px;width:1px;height:21.2px;background:#f1f1f1"></div>
<div class="ab" style="left:828px;top:522.0px;width:1px;height:21.2px;background:#f1f1f1"></div>
<div class="ab" style="left:909px;top:522.0px;width:1px;height:21.2px;background:#f1f1f1"></div>
<div class="ab" style="left:1068px;top:522.0px;width:1px;height:21.2px;background:#f1f1f1"></div>
<div class="t num" style="right:983.5px;top:528.5px">11</div>
<svg class="ab" style="left:311.2px;top:529.0px" width="6" height="8" viewBox="0 0 6 8"><path d="M1.4 3.6V2.5a1.6 1.6 0 0 1 3.2 0V3.6" fill="none" stroke="#2566c8" stroke-width="1.1"/><rect x="0.4" y="3.4" width="5.2" height="4.3" rx="0.5" fill="#2566c8"/></svg>
<div class="t lnk" style="left:319.8px;top:529.0px;letter-spacing:0.237px">emergency-weather.yahoo.co.jp/weathe...</div>
<div class="t num" style="right:698.5px;top:528.5px">106,087</div>
<div class="t num" style="right:619px;top:528.5px">$146,400</div>
<div class="t num" style="right:534.8px;top:528.5px">1</div>
<div class="t num" style="right:468.20000000000005px;top:528.5px">27</div>
<div class="ab" style="left:816.6px;top:530.6px;width:5px;height:5px;border-radius:50%;background:#f0b300"></div>
<div class="t num" style="right:378.79999999999995px;top:528.5px">0</div>
<div class="t kwj" style="left:918px;top:528.6px">地震</div>
<div class="t num" style="right:142.5px;top:528.5px">106,087</div>
<div class="ab" style="left:251px;top:544.2px;width:895px;height:22.2px;background:#fff;border-bottom:1px solid #ededed"></div>
<div class="ab" style="left:512px;top:544.2px;width:1px;height:21.2px;background:#f1f1f1"></div>
<div class="ab" style="left:589px;top:544.2px;width:1px;height:21.2px;background:#f1f1f1"></div>
<div class="ab" style="left:669px;top:544.2px;width:1px;height:21.2px;background:#f1f1f1"></div>
<div class="ab" style="left:749px;top:544.2px;width:1px;height:21.2px;background:#f1f1f1"></div>
<div class="ab" style="left:828px;top:544.2px;width:1px;height:21.2px;background:#f1f1f1"></div>
<div class="ab" style="left:909px;top:544.2px;width:1px;height:21.2px;background:#f1f1f1"></div>
<div class="ab" style="left:1068px;top:544.2px;width:1px;height:21.2px;background:#f1f1f1"></div>
<div class="t num" style="right:983.5px;top:550.7px">12</div>
<svg class="ab" style="left:311.2px;top:551.2px" width="6" height="8" viewBox="0 0 6 8"><path d="M1.4 3.6V2.5a1.6 1.6 0 0 1 3.2 0V3.6" fill="none" stroke="#2566c8" stroke-width="1.1"/><rect x="0.4" y="3.4" width="5.2" height="4.3" rx="0.5" fill="#2566c8"/></svg>
<div class="t lnk" style="left:319.8px;top:551.2px;letter-spacing:0.404px">map.yahoo.co.jp/?lat=35.67717&amp;lon=1...</div>
<div class="t num" style="right:698.5px;top:550.7px">95,257</div>
<div class="t num" style="right:619px;top:550.7px">$27,631</div>
<div class="t num" style="right:534.8px;top:550.7px">10</div>
<div class="t num" style="right:468.20000000000005px;top:550.7px">27</div>
<div class="ab" style="left:816.6px;top:552.8px;width:5px;height:5px;border-radius:50%;background:#f0b300"></div>
<div class="t num" style="right:378.79999999999995px;top:550.7px">0</div>
<div class="t kw" style="left:918px;top:550.8px">map</div>
<div class="t num" style="right:142.5px;top:550.7px">95,081</div>
<div class="ab" style="left:251px;top:566.4px;width:895px;height:22.2px;background:#fff;border-bottom:1px solid #ededed"></div>
<div class="ab" style="left:512px;top:566.4px;width:1px;height:21.2px;background:#f1f1f1"></div>
<div class="ab" style="left:589px;top:566.4px;width:1px;height:21.2px;background:#f1f1f1"></div>
<div class="ab" style="left:669px;top:566.4px;width:1px;height:21.2px;background:#f1f1f1"></div>
<div class="ab" style="left:749px;top:566.4px;width:1px;height:21.2px;background:#f1f1f1"></div>
<div class="ab" style="left:828px;top:566.4px;width:1px;height:21.2px;background:#f1f1f1"></div>
<div class="ab" style="left:909px;top:566.4px;width:1px;height:21.2px;background:#f1f1f1"></div>
<div class="ab" style="left:1068px;top:566.4px;width:1px;height:21.2px;background:#f1f1f1"></div>
<div class="t num" style="right:983.5px;top:572.9px">13</div>
<svg class="ab" style="left:311.2px;top:573.4px" width="6" height="8" viewBox="0 0 6 8"><path d="M1.4 3.6V2.5a1.6 1.6 0 0 1 3.2 0V3.6" fill="none" stroke="#2566c8" stroke-width="1.1"/><rect x="0.4" y="3.4" width="5.2" height="4.3" rx="0.5" fill="#2566c8"/></svg>
<div class="t lnk" style="left:319.8px;top:573.4px;letter-spacing:0.204px">games.yahoo.co.jp/</div>
<div class="t num" style="right:698.5px;top:572.9px">94,189</div>
<div class="t num" style="right:619px;top:572.9px">$127,155</div>
<div class="t num" style="right:534.8px;top:572.9px">8</div>
<div class="t num" style="right:468.20000000000005px;top:572.9px">27</div>
<div class="ab" style="left:816.6px;top:575.0px;width:5px;height:5px;border-radius:50%;background:#f0b300"></div>
<div class="t num" style="right:378.79999999999995px;top:572.9px">1,121</div>
<div class="t kwj" style="left:918px;top:573.0px">ゲーム</div>
<div class="t num" style="right:142.5px;top:572.9px">94,189</div>
<div class="ab" style="left:251px;top:588.6px;width:895px;height:22.2px;background:#fff;border-bottom:1px solid #ededed"></div>
<div class="ab" style="left:512px;top:588.6px;width:1px;height:21.2px;background:#f1f1f1"></div>
<div class="ab" style="left:589px;top:588.6px;width:1px;height:21.2px;background:#f1f1f1"></div>
<div class="ab" style="left:669px;top:588.6px;width:1px;height:21.2px;background:#f1f1f1"></div>
<div class="ab" style="left:749px;top:588.6px;width:1px;height:21.2px;background:#f1f1f1"></div>
<div class="ab" style="left:828px;top:588.6px;width:1px;height:21.2px;background:#f1f1f1"></div>
<div class="ab" style="left:909px;top:588.6px;width:1px;height:21.2px;background:#f1f1f1"></div>
<div class="ab" style="left:1068px;top:588.6px;width:1px;height:21.2px;background:#f1f1f1"></div>
<div class="t num" style="right:983.5px;top:595.1px">14</div>
<svg class="ab" style="left:311.2px;top:595.6px" width="6" height="8" viewBox="0 0 6 8"><path d="M1.4 3.6V2.5a1.6 1.6 0 0 1 3.2 0V3.6" fill="none" stroke="#2566c8" stroke-width="1.1"/><rect x="0.4" y="3.4" width="5.2" height="4.3" rx="0.5" fill="#2566c8"/></svg>
<div class="t lnk" style="left:319.8px;top:595.6px;letter-spacing:0.397px">sports.yahoo.co.jp/m/keiba/</div>
<div class="t num" style="right:698.5px;top:595.1px">88,150</div>
<div class="t num" style="right:619px;top:595.1px">$890,978</div>
<div class="t num" style="right:534.8px;top:595.1px">10</div>
<div class="t num" style="right:468.20000000000005px;top:595.1px">27</div>
<div class="ab" style="left:816.6px;top:597.2px;width:5px;height:5px;border-radius:50%;background:#f0b300"></div>
<div class="t num" style="right:378.79999999999995px;top:595.1px">6</div>
<div class="t kwj" style="left:918px;top:595.2px">競馬</div>
<div class="t num" style="right:142.5px;top:595.1px">84,088</div>
<div class="ab" style="left:251px;top:610.8px;width:895px;height:22.2px;background:#fff;border-bottom:1px solid #ededed"></div>
<div class="ab" style="left:512px;top:610.8px;width:1px;height:21.2px;background:#f1f1f1"></div>
<div class="ab" style="left:589px;top:610.8px;width:1px;height:21.2px;background:#f1f1f1"></div>
<div class="ab" style="left:669px;top:610.8px;width:1px;height:21.2px;background:#f1f1f1"></div>
<div class="ab" style="left:749px;top:610.8px;width:1px;height:21.2px;background:#f1f1f1"></div>
<div class="ab" style="left:828px;top:610.8px;width:1px;height:21.2px;background:#f1f1f1"></div>
<div class="ab" style="left:909px;top:610.8px;width:1px;height:21.2px;background:#f1f1f1"></div>
<div class="ab" style="left:1068px;top:610.8px;width:1px;height:21.2px;background:#f1f1f1"></div>
<div class="t num" style="right:983.5px;top:617.3px">15</div>
<svg class="ab" style="left:311.2px;top:617.8px" width="6" height="8" viewBox="0 0 6 8"><path d="M1.4 3.6V2.5a1.6 1.6 0 0 1 3.2 0V3.6" fill="none" stroke="#2566c8" stroke-width="1.1"/><rect x="0.4" y="3.4" width="5.2" height="4.3" rx="0.5" fill="#2566c8"/></svg>
<div class="t lnk" style="left:319.8px;top:617.8px;letter-spacing:0.394px">news.yahoo.co.jp/articles/18bb86dff73...</div>
<div class="t num" style="right:698.5px;top:617.3px">86,489</div>
<div class="t num" style="right:619px;top:617.3px">$784,639</div>
<div class="t num" style="right:534.8px;top:617.3px">12</div>
<div class="t num" style="right:468.20000000000005px;top:617.3px">27</div>
<div class="ab" style="left:816.6px;top:619.4px;width:5px;height:5px;border-radius:50%;background:#f0b300"></div>
<div class="t num" style="right:378.79999999999995px;top:617.3px">0</div>
<div class="t kw" style="left:918px;top:617.4px">apple</div>
<div class="t num" style="right:142.5px;top:617.3px">68,776</div>
<div class="ab" style="left:251px;top:633.0px;width:895px;height:22.2px;background:#fff;border-bottom:1px solid #ededed"></div>
<div class="ab" style="left:512px;top:633.0px;width:1px;height:21.2px;background:#f1f1f1"></div>
<div class="ab" style="left:589px;top:633.0px;width:1px;height:21.2px;background:#f1f1f1"></div>
<div class="ab" style="left:669px;top:633.0px;width:1px;height:21.2px;background:#f1f1f1"></div>
<div class="ab" style="left:749px;top:633.0px;width:1px;height:21.2px;background:#f1f1f1"></div>
<div class="ab" style="left:828px;top:633.0px;width:1px;height:21.2px;background:#f1f1f1"></div>
<div class="ab" style="left:909px;top:633.0px;width:1px;height:21.2px;background:#f1f1f1"></div>
<div class="ab" style="left:1068px;top:633.0px;width:1px;height:21.2px;background:#f1f1f1"></div>
<div class="t num" style="right:983.5px;top:639.5px">16</div>
<svg class="ab" style="left:311.2px;top:640.0px" width="6" height="8" viewBox="0 0 6 8"><path d="M1.4 3.6V2.5a1.6 1.6 0 0 1 3.2 0V3.6" fill="none" stroke="#2566c8" stroke-width="1.1"/><rect x="0.4" y="3.4" width="5.2" height="4.3" rx="0.5" fill="#2566c8"/></svg>
<div class="t lnk" style="left:319.8px;top:640.0px;letter-spacing:0.344px">shopping.yahoo.co.jp/ranking/keyword/...</div>
<div class="t num" style="right:698.5px;top:639.5px">69,367</div>
<div class="t num" style="right:619px;top:639.5px">$20,224</div>
<div class="t num" style="right:534.8px;top:639.5px">10</div>
<div class="t num" style="right:468.20000000000005px;top:639.5px">27</div>
<div class="ab" style="left:816.6px;top:641.6px;width:5px;height:5px;border-radius:50%;background:#f0b300"></div>
<div class="t num" style="right:378.79999999999995px;top:639.5px">0</div>
<div class="t kwj" style="left:918px;top:639.6px">熱中 症 対策 グッズ</div>
<div class="t num" style="right:142.5px;top:639.5px">33,277</div>
<svg class="ab" style="left:494px;top:304.9px" width="12" height="11" viewBox="0 0 12 11"><path d="M7 0L12 5.2L7 10.6V7.6C3.6 7.4 1.6 8.6 0 10.6C0.6 6.4 3.2 4 7 3.6Z" fill="#c4c4c4"/></svg>
<div class="ab" style="left:302.8px;top:277.9px;width:208.8px;height:375px;border:3px solid #ff0a0a;box-shadow:inset 0 0 0 1px #dceef4"></div>
<div class="ab" style="left:909px;top:277.9px;width:159.3px;height:375px;border:3px solid #ff0a0a;box-shadow:inset 0 0 0 1px #dceef4"></div>
</div>
</body></html>
